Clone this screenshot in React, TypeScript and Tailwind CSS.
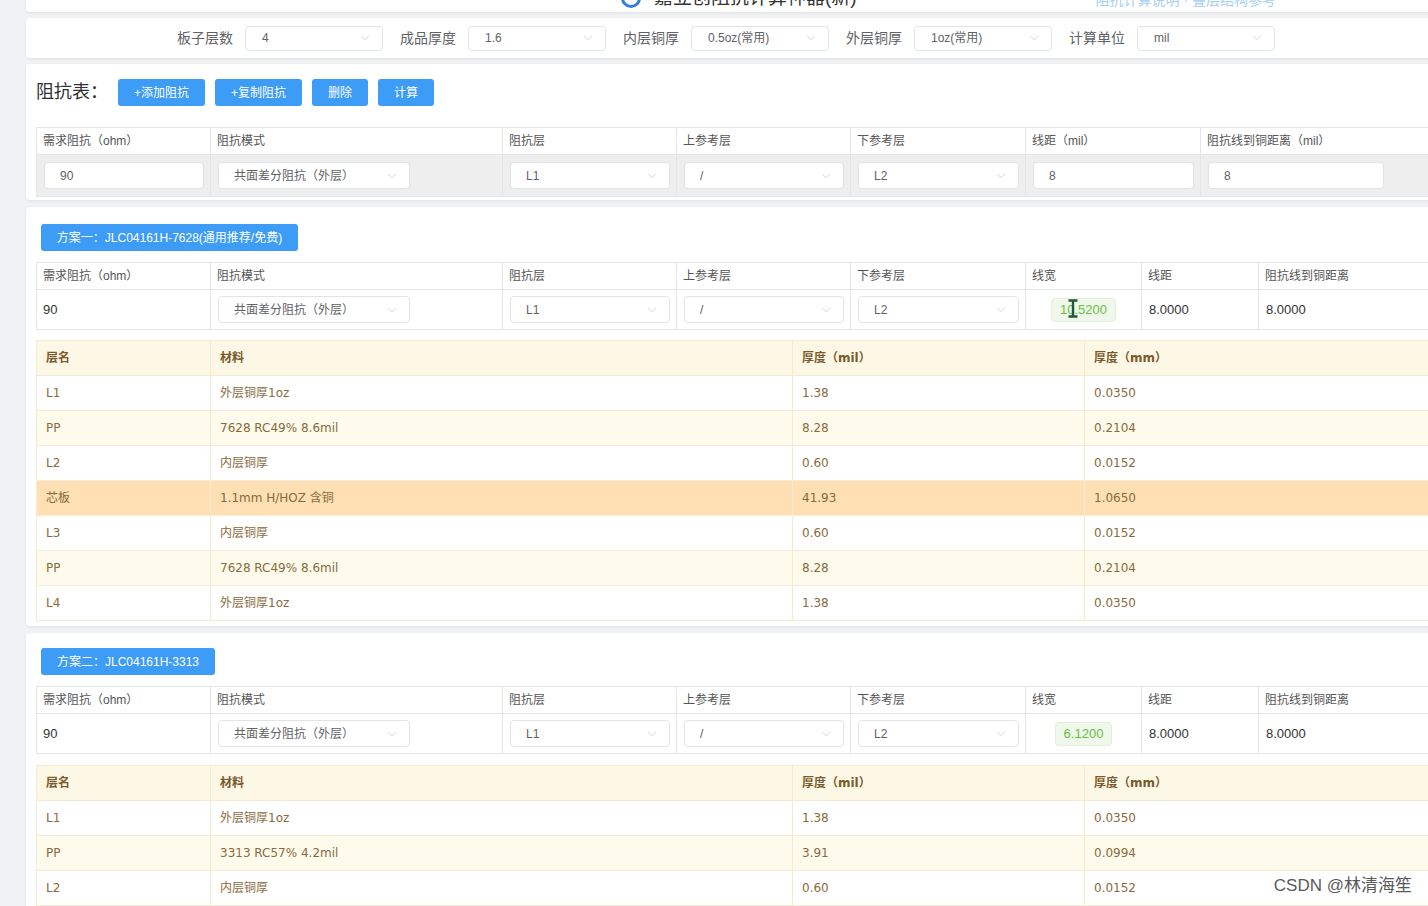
import { ChevronDown } from 'lucide-react'

type Layer = { name: string; mat: string; mil: string; mm: string; kind: 'cu' | 'pp' | 'core' }

const plan1: Layer[] = [
  { name: 'L1', mat: '外层铜厚1oz', mil: '1.38', mm: '0.0350', kind: 'cu' },
  { name: 'PP', mat: '7628 RC49% 8.6mil', mil: '8.28', mm: '0.2104', kind: 'pp' },
  { name: 'L2', mat: '内层铜厚', mil: '0.60', mm: '0.0152', kind: 'cu' },
  { name: '芯板', mat: '1.1mm H/HOZ 含铜', mil: '41.93', mm: '1.0650', kind: 'core' },
  { name: 'L3', mat: '内层铜厚', mil: '0.60', mm: '0.0152', kind: 'cu' },
  { name: 'PP', mat: '7628 RC49% 8.6mil', mil: '8.28', mm: '0.2104', kind: 'pp' },
  { name: 'L4', mat: '外层铜厚1oz', mil: '1.38', mm: '0.0350', kind: 'cu' },
]

const plan2: Layer[] = [
  { name: 'L1', mat: '外层铜厚1oz', mil: '1.38', mm: '0.0350', kind: 'cu' },
  { name: 'PP', mat: '3313 RC57% 4.2mil', mil: '3.91', mm: '0.0994', kind: 'pp' },
  { name: 'L2', mat: '内层铜厚', mil: '0.60', mm: '0.0152', kind: 'cu' },
  { name: '芯板', mat: '1.3mm H/HOZ 含铜', mil: '49.80', mm: '1.2650', kind: 'core' },
  { name: 'L3', mat: '内层铜厚', mil: '0.60', mm: '0.0152', kind: 'cu' },
]

function Select({ value, className }: { value: string; className: string }) {
  return (
    <div className={`h-[27px] bg-white border border-[#e1e3e8] rounded-[4px] flex items-center justify-between pl-[15px] pr-[10px] text-[12px] text-[#606266] ${className}`}>
      <span>{value}</span>
      <ChevronDown size={14} strokeWidth={1.2} className="text-[#c0c4cc]" />
    </div>
  )
}

function Field({ label, value }: { label: string; value: string }) {
  return (
    <div className="flex items-center">
      <span className="w-[56px] text-[14px] text-[#606266]">{label}</span>
      <div className="ml-[12px] w-[138px] h-[25px] border border-[#e1e3e8] rounded-[4px] flex items-center justify-between pl-[16px] pr-[10px] text-[12px] text-[#606266]">
        <span>{value}</span>
        <ChevronDown size={14} strokeWidth={1.2} className="text-[#c0c4cc]" />
      </div>
    </div>
  )
}

const th = 'h-[27px] px-[6px] text-left font-normal text-[12px] text-[#555] border border-[#e4e6ea]'
const td = 'px-[7px] border border-[#e4e6ea]'

function InputTable() {
  return (
    <table className="table-fixed border-collapse w-[1440px]">
      <colgroup>
        <col className="w-[174px]" />
        <col className="w-[292px]" />
        <col className="w-[174px]" />
        <col className="w-[174px]" />
        <col className="w-[175px]" />
        <col className="w-[175px]" />
        <col />
      </colgroup>
      <thead>
        <tr>
          <th className={th}>需求阻抗（ohm）</th>
          <th className={th}>阻抗模式</th>
          <th className={th}>阻抗层</th>
          <th className={th}>上参考层</th>
          <th className={th}>下参考层</th>
          <th className={th}>线距（mil）</th>
          <th className={th}>阻抗线到铜距离（mil）</th>
        </tr>
      </thead>
      <tbody>
        <tr className="h-[42px] bg-[#eeeeee]">
          <td className={td}>
            <div className="h-[27px] w-[160px] bg-white border border-[#e1e3e8] rounded-[4px] flex items-center pl-[15px] text-[12px] text-[#606266]">90</div>
          </td>
          <td className={td}><Select value="共面差分阻抗（外层）" className="w-[192px]" /></td>
          <td className={td}><Select value="L1" className="w-[160px]" /></td>
          <td className={td}><Select value="/" className="w-[160px]" /></td>
          <td className={td}><Select value="L2" className="w-[161px]" /></td>
          <td className={td}>
            <div className="h-[27px] w-[161px] bg-white border border-[#e1e3e8] rounded-[4px] flex items-center pl-[15px] text-[12px] text-[#606266]">8</div>
          </td>
          <td className={td}>
            <div className="h-[27px] w-[176px] bg-white border border-[#e1e3e8] rounded-[4px] flex items-center pl-[15px] text-[12px] text-[#606266]">8</div>
          </td>
        </tr>
      </tbody>
    </table>
  )
}

function IBeam() {
  return (
    <svg className="absolute left-[15px] top-[0px]" width="12" height="19" viewBox="0 0 12 19">
      <path d="M1.5 1.5h9M1.5 17.5h9M6 1.5v16" stroke="#1d5a3c" strokeWidth="2.4" fill="none" />
    </svg>
  )
}

function ResultTable({ width, cursor }: { width: string; cursor?: boolean }) {
  return (
    <table className="table-fixed border-collapse w-[1440px]">
      <colgroup>
        <col className="w-[174px]" />
        <col className="w-[292px]" />
        <col className="w-[174px]" />
        <col className="w-[174px]" />
        <col className="w-[175px]" />
        <col className="w-[116px]" />
        <col className="w-[117px]" />
        <col />
      </colgroup>
      <thead>
        <tr>
          <th className={th}>需求阻抗（ohm）</th>
          <th className={th}>阻抗模式</th>
          <th className={th}>阻抗层</th>
          <th className={th}>上参考层</th>
          <th className={th}>下参考层</th>
          <th className={th}>线宽</th>
          <th className={th}>线距</th>
          <th className={th}>阻抗线到铜距离</th>
        </tr>
      </thead>
      <tbody>
        <tr className="h-[40px] bg-white text-[13px] text-[#333]">
          <td className="px-[6px] border border-[#e4e6ea]">90</td>
          <td className={td}><Select value="共面差分阻抗（外层）" className="w-[192px]" /></td>
          <td className={td}><Select value="L1" className="w-[160px]" /></td>
          <td className={td}><Select value="/" className="w-[160px]" /></td>
          <td className={td}><Select value="L2" className="w-[161px]" /></td>
          <td className="border border-[#e4e6ea]">
            <div className="flex justify-center">
              <span className="relative h-[24px] px-[8px] flex items-center bg-[#eff8ea] border border-[#e1f1d6] rounded-[4px] text-[13px] text-[#6cbf45]">
                {width}
                {cursor && <IBeam />}
              </span>
            </div>
          </td>
          <td className="px-[7px] border border-[#e4e6ea]">8.0000</td>
          <td className="px-[7px] border border-[#e4e6ea]">8.0000</td>
        </tr>
      </tbody>
    </table>
  )
}

const sth = 'h-[35px] px-[9px] text-left font-bold text-[12px] text-[#7b5a2c] border border-[#f3ecd2]'
const std = 'px-[9px] border border-[#f3ecd2]'

function StackTable({ rows }: { rows: Layer[] }) {
  return (
    <table className="table-fixed border-collapse w-[1440px] font-['DejaVu_Sans','Noto_Sans_CJK_SC',sans-serif]">
      <colgroup>
        <col className="w-[174px]" />
        <col className="w-[582px]" />
        <col className="w-[292px]" />
        <col />
      </colgroup>
      <thead>
        <tr className="bg-[#fdf8e6]">
          <th className={sth}>层名</th>
          <th className={sth}>材料</th>
          <th className={sth}>厚度（mil）</th>
          <th className={sth}>厚度（mm）</th>
        </tr>
      </thead>
      <tbody>
        {rows.map((r, i) => (
          <tr
            key={i}
            className={`h-[35px] text-[12px] text-[#8a6a3c] ${
              r.kind === 'core' ? 'bg-[#ffdfb4]' : r.kind === 'pp' ? 'bg-[#fefaec]' : 'bg-white'
            }`}
          >
            <td className={std}>{r.name}</td>
            <td className={std}>{r.mat}</td>
            <td className={std}>{r.mil}</td>
            <td className={std}>{r.mm}</td>
          </tr>
        ))}
      </tbody>
    </table>
  )
}

function PlanButton({ label, w }: { label: string; w: string }) {
  return (
    <div className={`h-[27px] ${w} bg-[#3d9cf5] rounded-[3px] text-white text-[12px] flex items-center justify-center`}>
      {label}
    </div>
  )
}

export default function App() {
  return (
    <div className="relative w-[1428px] h-[906px] overflow-hidden bg-[#f1f2f4] font-['Liberation_Sans','Noto_Sans_CJK_SC',sans-serif]">
      <div className="pl-[26px] flex flex-col">
        {/* 标题 */}
        <div className="-mt-[28px] h-[40px] w-[1460px] bg-white rounded-[4px] shadow-[0_1px_3px_rgba(0,0,0,0.08)] flex items-end pb-[3px]">
          <div className="ml-[594px] flex items-center gap-[12px]">
            <svg width="22" height="22" viewBox="0 0 22 22">
              <circle cx="11" cy="11" r="8.5" stroke="#2f7fe0" strokeWidth="3" fill="none" />
            </svg>
            <span className="text-[19px] leading-[22px] text-[#333]">嘉立创阻抗计算神器(新)</span>
          </div>
          <span className="ml-auto mr-[210px] text-[14px] leading-[18px] text-[#a6cff5]">阻抗计算说明 · 叠层结构参考</span>
        </div>

        {/* 参数 */}
        <div className="mt-[6px] h-[40px] w-[1460px] bg-white rounded-[4px] shadow-[0_1px_3px_rgba(0,0,0,0.08)] flex items-center gap-[17px] pl-[151px]">
          <Field label="板子层数" value="4" />
          <Field label="成品厚度" value="1.6" />
          <Field label="内层铜厚" value="0.5oz(常用)" />
          <Field label="外层铜厚" value="1oz(常用)" />
          <Field label="计算单位" value="mil" />
        </div>

        {/* 阻抗表 */}
        <div className="mt-[6px] w-[1460px] bg-white rounded-[4px] shadow-[0_1px_3px_rgba(0,0,0,0.08)] px-[10px] pt-[15px] pb-[3px]">
          <div className="flex items-center gap-[10px]">
            <span className="w-[72px] text-[18px] text-[#303133]">阻抗表：</span>
            <PlanButton label="+添加阻抗" w="w-[87px]" />
            <PlanButton label="+复制阻抗" w="w-[87px]" />
            <PlanButton label="删除" w="w-[56px]" />
            <PlanButton label="计算" w="w-[56px]" />
          </div>
          <div className="mt-[21px]">
            <InputTable />
          </div>
        </div>

        {/* 方案一 */}
        <div className="mt-[7px] w-[1460px] bg-white rounded-[4px] shadow-[0_1px_3px_rgba(0,0,0,0.08)] px-[10px] pt-[17px] pb-[5px]">
          <div className="pl-[5px]">
            <PlanButton label="方案一：JLC04161H-7628(通用推荐/免费)" w="w-[257px]" />
          </div>
          <div className="mt-[11px]">
            <ResultTable width="10.5200" cursor />
          </div>
          <div className="mt-[10px]">
            <StackTable rows={plan1} />
          </div>
        </div>

        {/* 方案二 */}
        <div className="mt-[7px] w-[1460px] bg-white rounded-[4px] shadow-[0_1px_3px_rgba(0,0,0,0.08)] px-[10px] pt-[15px] pb-[5px]">
          <div className="pl-[5px]">
            <PlanButton label="方案二：JLC04161H-3313" w="w-[174px]" />
          </div>
          <div className="mt-[11px]">
            <ResultTable width="6.1200" />
          </div>
          <div className="mt-[11px]">
            <StackTable rows={plan2} />
          </div>
        </div>
      </div>

      <span className="absolute right-[16px] bottom-[8px] text-[17px] text-[#5a5a5a] [text-shadow:0_0_2px_#fff]">CSDN @林清海笙</span>
    </div>
  )
}
